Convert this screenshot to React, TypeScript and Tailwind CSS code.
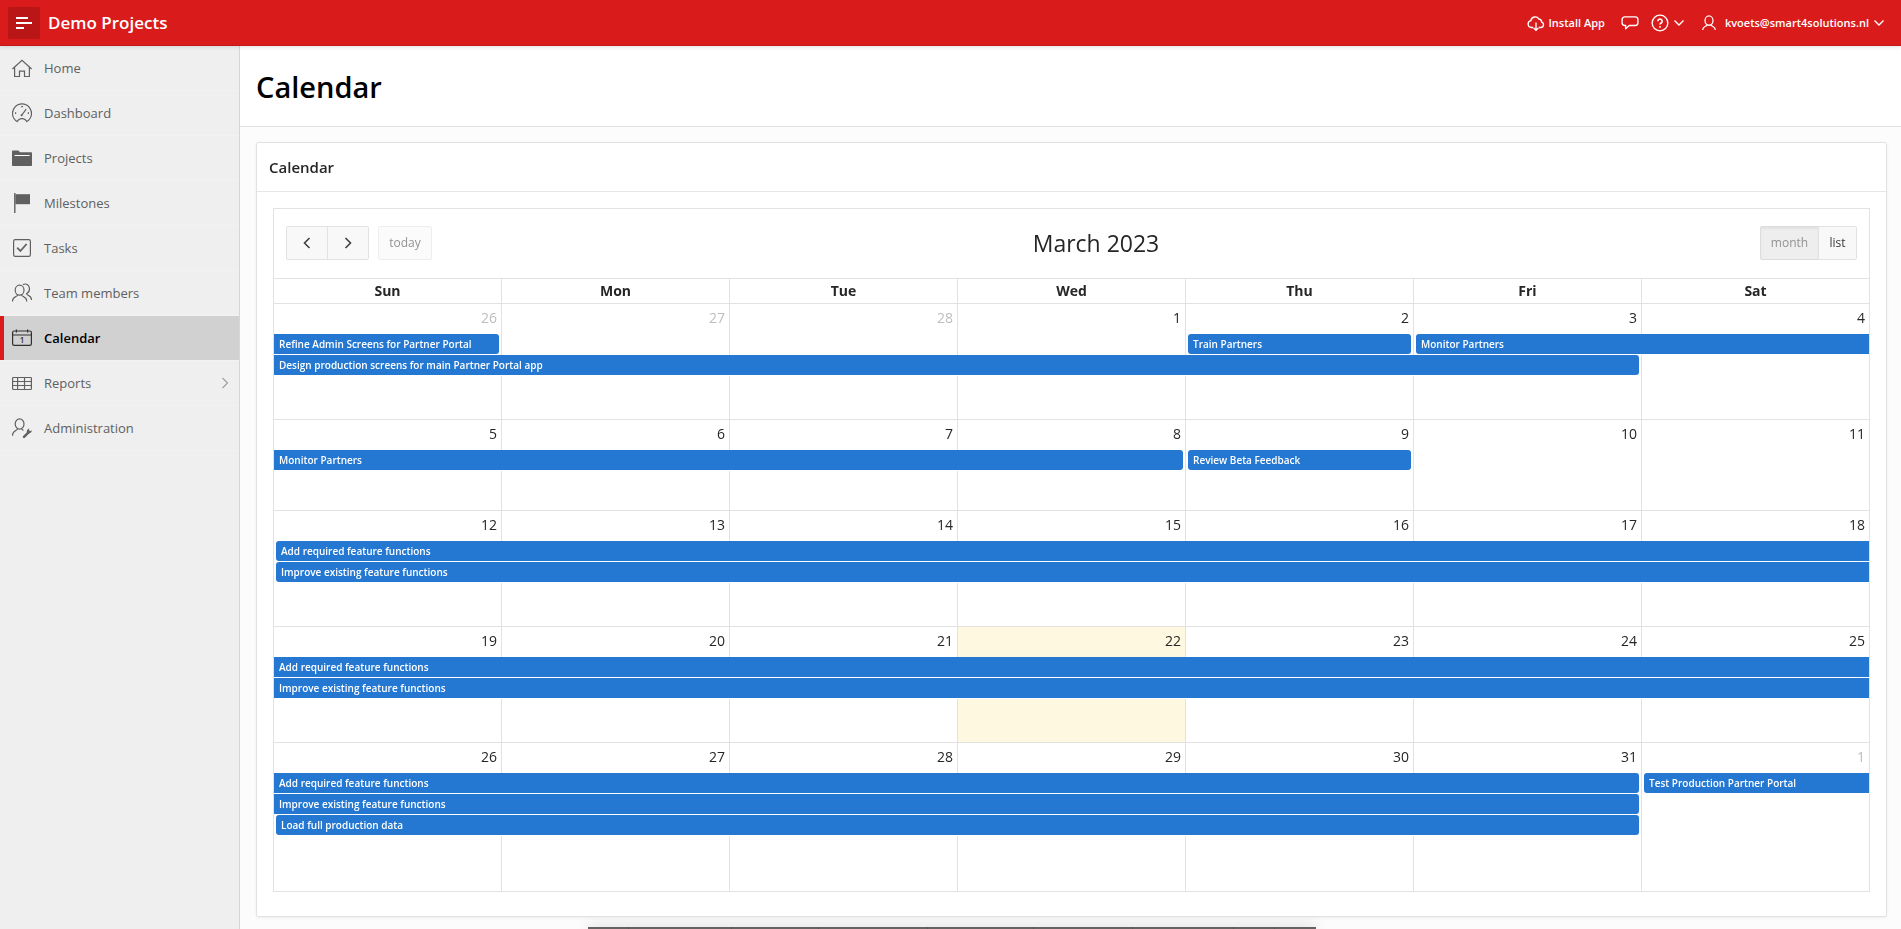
import React from "react";

type IconProps = { className?: string };

function Svg({ className = "size-5", children }: IconProps & { children: React.ReactNode }) {
  return (
    <svg viewBox="0 0 20 20" fill="none" stroke="currentColor" strokeWidth="1.2" className={className + " shrink-0"} aria-hidden="true">
      {children}
    </svg>
  );
}

const HomeIcon = () => (
  <Svg>
    <path d="M.4 11 10 2.2l9.6 8.8M2.6 9.3v9.2h4.9v-5.3h5v5.3h4.9V9.3" />
  </Svg>
);

const DashboardIcon = () => (
  <Svg>
    <path d="M5.2 18.6a9.5 9.5 0 1 1 9.6 0l-1.2-1.7a6.5 6.5 0 0 0-7.2 0z" strokeLinejoin="round" />
    <path d="m9.2 12.8 5-6.6" strokeWidth="1.1" />
    <circle cx="9.6" cy="12.3" r="1" fill="currentColor" stroke="none" />
    <path d="M9.2 3.6h1.8M3.6 9.2V11M16.4 9.2V11" />
  </Svg>
);

const FolderIcon = () => (
  <Svg>
    <path d="M0 3.6C0 3 .4 2.6 1 2.6h5.2c.4 0 .8.2 1 .6l.6 1H19c.6 0 1 .4 1 1V17c0 .6-.4 1-1 1H1c-.6 0-1-.4-1-1z" fill="currentColor" stroke="none" />
    <path d="M2.6 7.5h15" stroke="#fff" strokeWidth="1" />
  </Svg>
);

const FlagIcon = () => (
  <Svg>
    <path d="M2.8 0v20" strokeWidth="1.4" />
    <path d="M3.4 1.2H18v10H3.4z" fill="currentColor" stroke="none" />
  </Svg>
);

const CheckIcon = () => (
  <Svg>
    <rect x="1.6" y="1.6" width="16.8" height="16.8" rx="1.6" />
    <path d="m5.2 9.6 3.2 3.4 6.2-7" strokeWidth="1.8" />
  </Svg>
);

const TeamIcon = () => (
  <Svg>
    <ellipse cx="7.6" cy="7.2" rx="4.4" ry="5" />
    <path d="M5.6 12c-.2 1.6-5 1.6-5 5.6v.8M9.6 12c.2 1.6 5 1.6 5 5.6v.8" />
    <path d="M11 1.6c3.4-1.7 6.5.6 6.5 4.2 0 2.8-1.5 4.3-3 5 .2 1.6 4.9 1.8 4.9 5.500v.8" />
  </Svg>
);

const CalendarIcon = () => (
  <Svg>
    <rect x=".6" y="3" width="18.8" height="14.4" rx="1.6" />
    <path d="M.6 7h18.8M4.4 1.600v2.800M15.600 1.600v2.800" />
    <text x="10" y="15" textAnchor="middle" fontSize="8" fill="currentColor" stroke="none" fontWeight="600">1</text>
  </Svg>
);

const TableIcon = () => (
  <Svg>
    <rect x=".6" y="4.5" width="18.8" height="12" rx=".8" />
    <path d="M.6 8.500h18.800M.6 12.500h18.800M5.600 4.500v12M12.500 4.500v12" />
  </Svg>
);

const AdminIcon = () => (
  <Svg>
    <ellipse cx="7.6" cy="6" rx="4.4" ry="5.2" />
    <path d="M5.600 10.800C5.400 12.600.6 12.800.6 16.800v1M9.600 10.800c.1.800.9 1.200 1.800 1.600" />
    <path d="m12 18.800 5-5" strokeWidth="2.4" strokeLinecap="round" />
    <path d="M17.300 10.600a3 3 0 0 0-2.300 4.200 3 3 0 0 0 4.800-2.600l-1.800 1-1.200-1.200z" fill="currentColor" stroke="none" />
  </Svg>
);

const CloudIcon = () => (
  <Svg className="size-[18px]">
    <path d="M7 15H4.800a3.900 3.900 0 0 1-.5-7.700A4.900 4.900 0 0 1 13.300 5.600a3.500 3.500 0 0 1 3 3.400 3.100 3.100 0 0 1-.9 6H13" strokeWidth="1.5" />
    <path d="M10 9.500v8.600M7.400 15.600l2.600 2.600 2.600-2.600" strokeWidth="1.5" />
  </Svg>
);

const CommentIcon = () => (
  <Svg className="size-[18px]">
    <path d="M4.200 3.200h11.600a3 3 0 0 1 3 3v3.600a3 3 0 0 1-3 3H9.200l-4 3.600v-3.600h-1a3 3 0 0 1-3-3V6.200a3 3 0 0 1 3-3z" strokeWidth="1.5" strokeLinejoin="round" />
  </Svg>
);

const HelpIcon = () => (
  <Svg className="size-[18px]">
    <circle cx="10" cy="10" r="8.7" strokeWidth="1.5" />
    <path d="M7.600 8a2.400 2.300 0 1 1 3.600 2c-.8.500-1.200.9-1.200 1.800" strokeWidth="1.8" />
    <circle cx="10" cy="14.300" r="1.100" fill="currentColor" stroke="none" />
  </Svg>
);

const UserIcon = () => (
  <Svg className="size-4">
    <ellipse cx="10" cy="7" rx="5" ry="5.8" strokeWidth="1.6" />
    <path d="M7.600 12.300c-.2 1.900-5.400 1.900-5.400 5.700v.8M12.400 12.300c.2 1.900 5.400 1.900 5.400 5.700v.8" strokeWidth="1.6" />
  </Svg>
);

const Chevron = ({ d, className, width = 1.4 }: { d: string; className: string; width?: number }) => (
  <svg viewBox="0 0 12 12" fill="none" stroke="currentColor" strokeWidth={width} className={className} aria-hidden="true">
    <path d={d} />
  </svg>
);

const DOWN = "M1.500 3.500 6 8l4.500-4.500";
const RIGHT = "M3.500 1 8.500 6l-5 5";
const LEFT = "M8.500 1 3.500 6l5 5";

const nav = [
  { label: "Home", icon: <HomeIcon /> },
  { label: "Dashboard", icon: <DashboardIcon /> },
  { label: "Projects", icon: <FolderIcon /> },
  { label: "Milestones", icon: <FlagIcon /> },
  { label: "Tasks", icon: <CheckIcon /> },
  { label: "Team members", icon: <TeamIcon /> },
  { label: "Calendar", icon: <CalendarIcon />, active: true },
  { label: "Reports", icon: <TableIcon />, expandable: true },
  { label: "Administration", icon: <AdminIcon /> },
];

type Bar = { col: number; span: number; title: string; start?: boolean; end?: boolean };
type Week = { days: number[]; spare: string; lanes: Bar[][]; muted: number[]; today?: number };

const weeks: Week[] = [
  {
    days: [26, 27, 28, 1, 2, 3, 4],
    muted: [0, 1, 2],
    spare: "h-[43px]",
    lanes: [
      [
        { col: 0, span: 1, title: "Refine Admin Screens for Partner Portal", end: true },
        { col: 4, span: 1, title: "Train Partners", start: true, end: true },
        { col: 5, span: 2, title: "Monitor Partners", start: true },
      ],
      [{ col: 0, span: 6, title: "Design production screens for main Partner Portal app", end: true }],
    ],
  },
  {
    days: [5, 6, 7, 8, 9, 10, 11],
    muted: [],
    spare: "h-[39px]",
    lanes: [
      [
        { col: 0, span: 4, title: "Monitor Partners", end: true },
        { col: 4, span: 1, title: "Review Beta Feedback", start: true, end: true },
      ],
    ],
  },
  {
    days: [12, 13, 14, 15, 16, 17, 18],
    muted: [],
    spare: "h-[43px]",
    lanes: [
      [{ col: 0, span: 7, title: "Add required feature functions", start: true }],
      [{ col: 0, span: 7, title: "Improve existing feature functions", start: true }],
    ],
  },
  {
    days: [19, 20, 21, 22, 23, 24, 25],
    muted: [],
    today: 3,
    spare: "h-[43px]",
    lanes: [
      [{ col: 0, span: 7, title: "Add required feature functions" }],
      [{ col: 0, span: 7, title: "Improve existing feature functions" }],
    ],
  },
  {
    days: [26, 27, 28, 29, 30, 31, 1],
    muted: [6],
    spare: "h-[55px]",
    lanes: [
      [
        { col: 0, span: 6, title: "Add required feature functions", end: true },
        { col: 6, span: 1, title: "Test Production Partner Portal", start: true },
      ],
      [{ col: 0, span: 6, title: "Improve existing feature functions", end: true }],
      [{ col: 0, span: 6, title: "Load full production data", start: true, end: true }],
    ],
  },
];

const SIDE = "border-r border-r-[#e2e2e2]";

function Lane({ bars, today }: { bars: Bar[]; today?: number }) {
  const cells: React.ReactNode[] = [];
  let col = 0;
  while (col < 7) {
    const bar = bars.find((b) => b.col === col);
    if (!bar) {
      cells.push(<td key={col} className={`${SIDE} ${today === col ? "bg-[#fff8e0]" : ""}`} />);
      col += 1;
      continue;
    }
    const left = bar.start ? "ml-[2px] rounded-l-[3px]" : "";
    const right = bar.end ? "mr-[2px] rounded-r-[3px]" : "";
    cells.push(
      <td key={col} colSpan={bar.span} className={`p-0 align-top ${SIDE}`}>
        <a href="#event" className={`block h-5 truncate bg-[#2478d2] px-[5px] text-[10px] leading-5 font-semibold text-white ${left} ${right}`}>
          {bar.title}
        </a>
      </td>
    );
    col += bar.span;
  }
  return <tr className="h-[21px]">{cells}</tr>;
}

function MonthTable() {
  return (
    <table className="w-full table-fixed border-separate border-spacing-0 text-[#262626]">
      <thead>
        <tr className="h-[25px]">
          {["Sun", "Mon", "Tue", "Wed", "Thu", "Fri", "Sat"].map((d) => (
            <th key={d} scope="col" className={`border-t border-t-[#e2e2e2] p-0 text-sm leading-5 font-bold ${SIDE}`}>
              {d}
            </th>
          ))}
        </tr>
      </thead>
      {weeks.map((w, wi) => (
        <tbody key={wi}>
          <tr className="h-[31px]">
            {w.days.map((n, i) => (
              <td
                key={i}
                className={`border-t border-t-[#e2e2e2] px-1 pt-1 pb-0 text-right align-top text-sm leading-5 ${SIDE} ${w.muted.includes(i) ? "text-[#bebebe]" : ""} ${w.today === i ? "bg-[#fff8e0]" : ""}`}
              >
                {n}
              </td>
            ))}
          </tr>
          {w.lanes.map((bars, i) => (
            <Lane key={i} bars={bars} today={w.today} />
          ))}
          <tr className={w.spare}>
            {w.days.map((_, i) => (
              <td key={i} className={`${SIDE} ${w.today === i ? "bg-[#fff8e0]" : ""}`} />
            ))}
          </tr>
        </tbody>
      ))}
    </table>
  );
}

export default function App() {
  return (
    <div className="flex h-screen flex-col overflow-hidden bg-[#fcfcfc] font-['Open_Sans','Noto_Sans',sans-serif] text-[#262626]">
      <header className="z-20 flex h-[46px] shrink-0 items-center border-b border-[#c41818] bg-[#da1b1b] pr-4 pl-2 text-white shadow-[0_1px_4px_rgba(0,0,0,0.12)]">
        <button aria-label="Toggle navigation" className="flex size-8 items-center justify-center rounded-[2px] bg-[#b91717]">
          <svg viewBox="0 0 16 16" className="size-4" fill="none" stroke="currentColor" strokeWidth="2" aria-hidden="true">
            <path d="M0 3h12M0 8h16M0 13h8" />
          </svg>
        </button>
        <a href="#home" className="ml-2 text-[17px] leading-6 font-semibold">Demo Projects</a>
        <div className="ml-auto flex items-center text-[11px] leading-5 font-semibold">
          <button className="flex items-center gap-1">
            <CloudIcon />
            Install App
          </button>
          <button aria-label="Feedback" className="ml-4">
            <CommentIcon />
          </button>
          <button aria-label="Help" className="ml-3 flex items-center gap-1">
            <HelpIcon />
            <Chevron d={DOWN} className="size-3" />
          </button>
          <button className="ml-4 flex items-center gap-1">
            <UserIcon />
            <span className="ml-1">kvoets@smart4solutions.nl</span>
            <Chevron d={DOWN} className="size-3" />
          </button>
        </div>
      </header>

      <div className="flex min-h-0 flex-1">
        <nav className="w-60 shrink-0 border-r border-[#d6d6d6] bg-[#efefef]">
          <ul>
            {nav.map((n) => (
              <li key={n.label} className="border-b border-[#f2f2f2]">
                <a
                  href={"#" + n.label.toLowerCase().replace(" ", "-")}
                  className={`flex h-11 items-center gap-3 border-l-4 pr-2 pl-2 text-[13px] leading-5 ${n.active ? "border-[#da1b1b] bg-[#d1d1d1] font-semibold text-black" : "border-transparent text-[#606060]"}`}
                >
                  <span className={n.active ? "text-[#303030]" : ""}>{n.icon}</span>
                  {n.label}
                  {n.expandable && <Chevron d={RIGHT} className="ml-auto size-3 text-[#a0a0a0]" width={1.2} />}
                </a>
              </li>
            ))}
          </ul>
        </nav>

        <main className="min-w-0 flex-1">
          <div className="border-b border-[#e2e2e2] bg-white px-4 pt-[21px] pb-[19px]">
            <h1 className="text-[29px] leading-10 font-semibold text-black">Calendar</h1>
          </div>
          <section className="relative z-10 mt-[15px] mr-[14px] ml-4 rounded-[2px] border border-[#e2e2e2] bg-white shadow-[0_1px_3px_rgba(0,0,0,0.06)]">
            <h2 className="border-b border-[#e6e6e6] px-3 py-3 text-[15px] leading-6 font-semibold">Calendar</h2>
            <div className="mx-4 mt-4 mb-6 border-y border-l border-[#e2e2e2]">
              <div className="flex items-center justify-between border-r border-[#e2e2e2] px-3 pt-[17px] pb-[18px]">
                <div className="flex text-xs">
                  <button aria-label="Previous month" className="flex h-[34px] w-[42px] items-center justify-center rounded-l-[2px] border border-[#e2e2e2] bg-[#f8f8f8] text-[#404040]">
                    <Chevron d={LEFT} className="size-3" width={1.6} />
                  </button>
                  <button aria-label="Next month" className="-ml-px flex h-[34px] w-[42px] items-center justify-center rounded-r-[2px] border border-[#e2e2e2] bg-[#f8f8f8] text-[#404040]">
                    <Chevron d={RIGHT} className="size-3" width={1.6} />
                  </button>
                  <button className="ml-[9px] h-[34px] w-[54px] rounded-[2px] border border-[#eeeeee] bg-[#fbfbfb] text-[#929292]">today</button>
                </div>
                <h2 className="text-[23px] leading-8">March 2023</h2>
                <div className="flex text-xs">
                  <button className="h-[34px] w-[59px] rounded-l-[2px] border border-[#dcdcdc] bg-[#eeeeee] text-[#929292] shadow-[inset_0_2px_2px_rgba(0,0,0,0.05)]">month</button>
                  <button className="-ml-px h-[34px] w-[39px] rounded-r-[2px] border border-[#e2e2e2] bg-[#f8f8f8] text-[#383838]">list</button>
                </div>
              </div>
              <MonthTable />
            </div>
          </section>
        </main>
      </div>

      <div className="fixed inset-x-0 bottom-0 flex justify-center">
        <div className="ml-[3px] flex h-[2px] w-[728px] bg-[#666262] shadow-[0_0_14px_rgba(0,0,0,0.45)]">
          {["w-[41px]", "w-[103px]", "w-[87px]", "w-[109px]", "w-[106px]", "w-[99px]", "w-[101px]", "w-[41px]"].map((w, i) => (
            <span key={i} className={`border-r border-[#585555] ${w}`} />
          ))}
        </div>
      </div>
    </div>
  );
}
